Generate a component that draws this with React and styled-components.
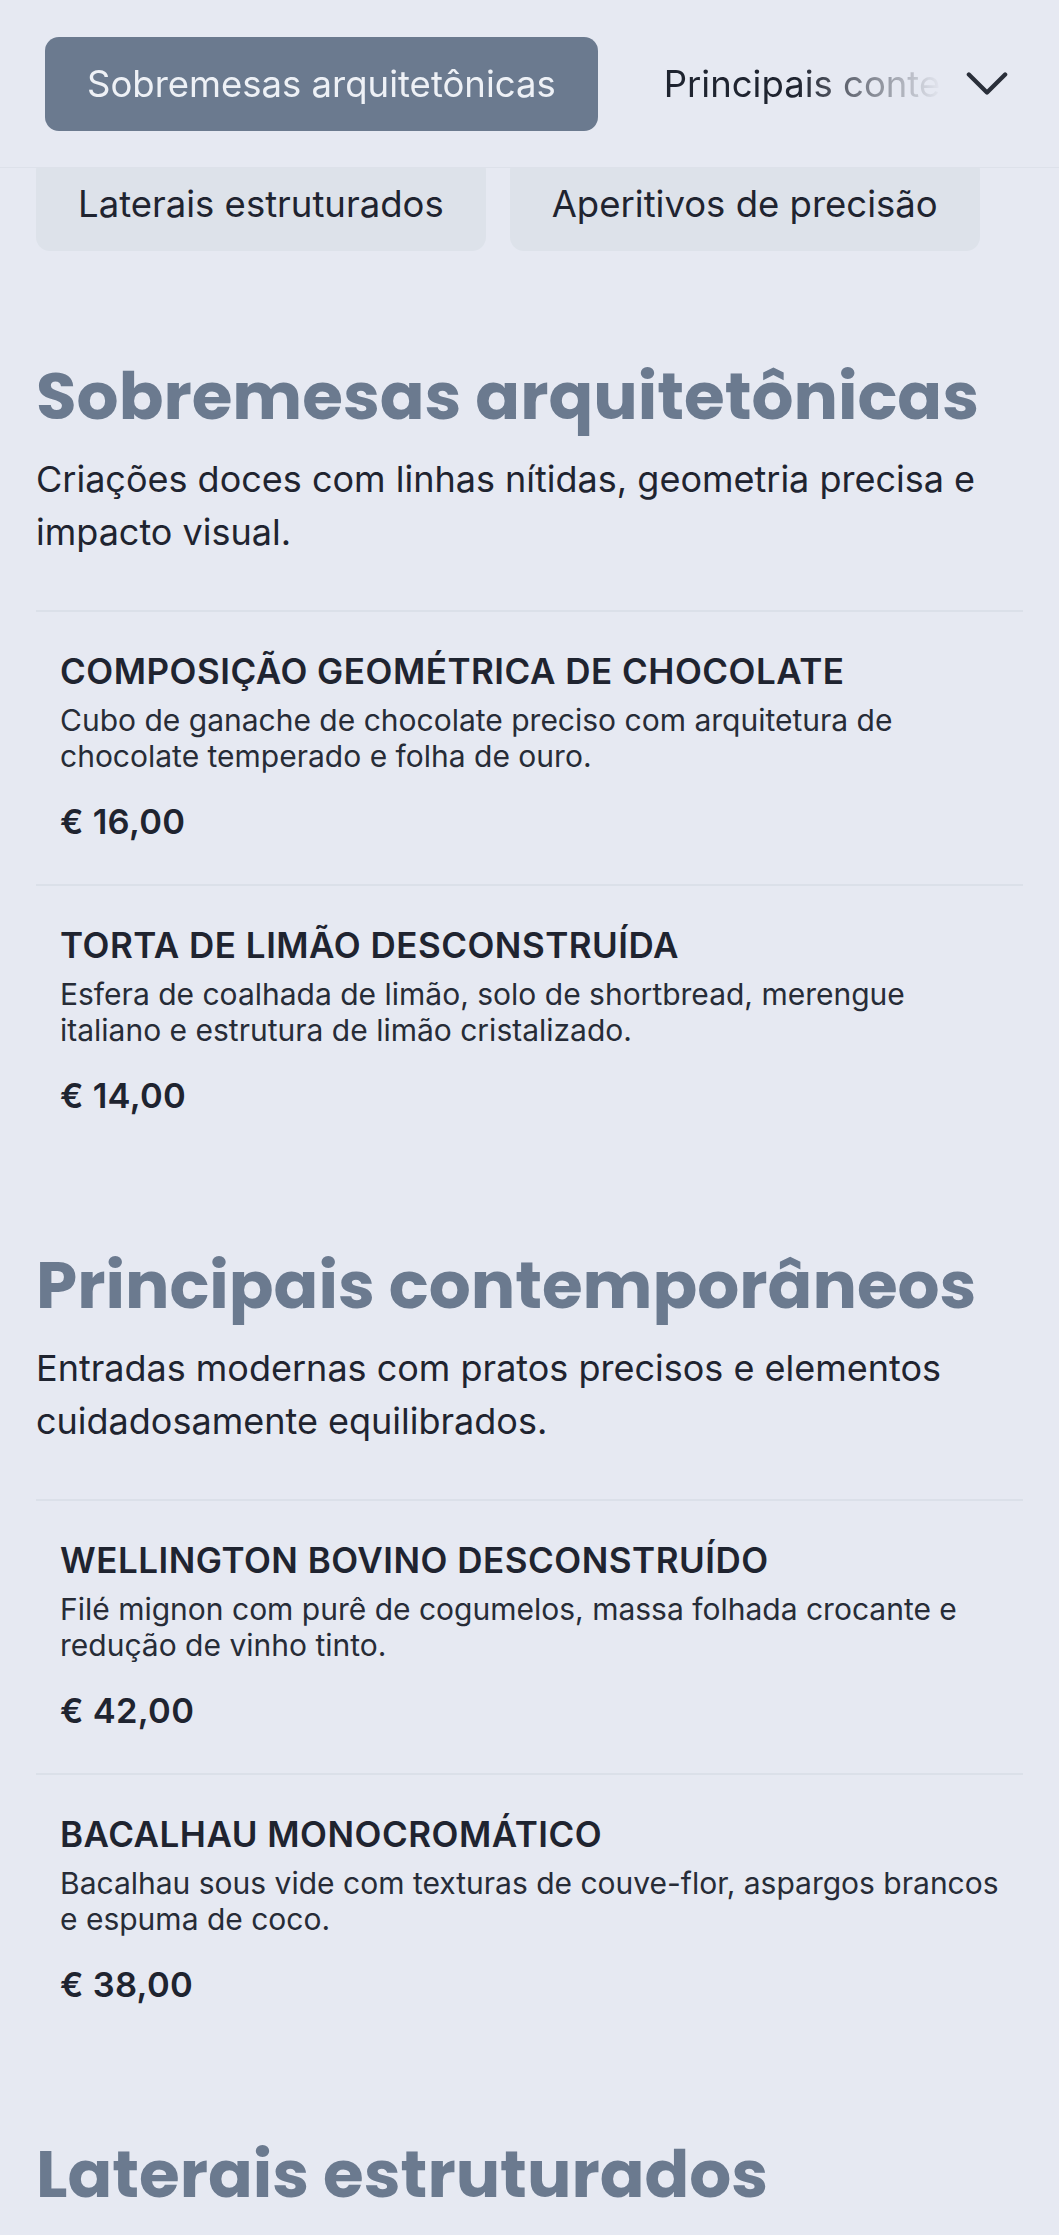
import React from "react";
import styled, { createGlobalStyle } from "styled-components";

const GlobalStyle = createGlobalStyle`
  * {
    box-sizing: border-box;
  }
  body {
    margin: 0;
    background: #e6e9f2;
    color: #1f2430;
    font-family: Inter, "Noto Sans", "Liberation Sans", sans-serif;
  }
`;

const Header = styled.header`
  position: sticky;
  top: 0;
  z-index: 10;
  height: 168px;
  display: flex;
  align-items: center;
  padding: 0 51px 0 45px;
  background: #e6e9f2;
  border-bottom: 1px solid #dde1ea;
`;

const TabScroller = styled.nav`
  flex: 1;
  display: flex;
  gap: 24px;
  overflow: hidden;
  margin-right: 24px;
  -webkit-mask-image: linear-gradient(to right, #000 84%, transparent 100%);
  mask-image: linear-gradient(to right, #000 84%, transparent 100%);
`;

const Tab = styled.button`
  flex-shrink: 0;
  border: none;
  border-radius: 14px;
  padding: 21px 42px;
  font-family: inherit;
  font-size: 36.5px;
  line-height: 52px;
  white-space: nowrap;
  cursor: pointer;
  background: ${(p) => (p.$active ? "#6b7a8f" : p.$muted ? "#dde2ea" : "transparent")};
  color: ${(p) => (p.$active ? "#eef1f6" : "#1f2430")};
`;

const MenuToggle = styled.button`
  display: flex;
  align-items: center;
  justify-content: center;
  width: 42px;
  height: 42px;
  padding: 0;
  border: none;
  background: none;
  color: #2a2f3a;
  cursor: pointer;
`;

const CutRow = styled.div`
  height: 83px;
  overflow: hidden;
  display: flex;
  align-items: flex-end;
  gap: 24px;
  padding: 0 36px;
`;

const Main = styled.main`
  padding: 18px 36px 80px 36px;
`;

const Section = styled.section`
  padding-top: 88px;
`;

const SectionTitle = styled.h2`
  margin: 0 0 17px 0;
  font-family: Poppins, Inter, "Noto Sans", sans-serif;
  font-weight: 700;
  font-size: 66px;
  line-height: 79px;
  color: #6b7a8f;
`;

const SectionText = styled.p`
  margin: 0 0 51px 0;
  font-size: 36px;
  line-height: 53px;
  color: #1f2430;
`;

const Item = styled.article`
  border-top: 2px solid #dbe0e9;
  padding: 39px 24px 40px 24px;
`;

const ItemName = styled.h3`
  margin: 0 0 10px 0;
  font-size: 35px;
  line-height: 41px;
  font-weight: 600;
  letter-spacing: 0.5px;
  text-transform: uppercase;
  color: #1f2430;
`;

const ItemText = styled.p`
  margin: 0 0 26px 0;
  font-size: 30px;
  line-height: 36px;
  color: #272c37;
`;

const Price = styled.div`
  font-size: 34.5px;
  line-height: 44px;
  font-weight: 600;
  letter-spacing: 0.3px;
  color: #1f2430;
`;

const sections = [
  {
    title: "Sobremesas arquitetônicas",
    text: "Criações doces com linhas nítidas, geometria precisa e impacto visual.",
    items: [
      {
        name: "Composição geométrica de chocolate",
        text: "Cubo de ganache de chocolate preciso com arquitetura de chocolate temperado e folha de ouro.",
        price: "€ 16,00",
      },
      {
        name: "Torta de limão desconstruída",
        text: "Esfera de coalhada de limão, solo de shortbread, merengue italiano e estrutura de limão cristalizado.",
        price: "€ 14,00",
      },
    ],
  },
  {
    title: "Principais contemporâneos",
    text: "Entradas modernas com pratos precisos e elementos cuidadosamente equilibrados.",
    items: [
      {
        name: "Wellington bovino desconstruído",
        text: "Filé mignon com purê de cogumelos, massa folhada crocante e redução de vinho tinto.",
        price: "€ 42,00",
      },
      {
        name: "Bacalhau monocromático",
        text: "Bacalhau sous vide com texturas de couve-flor, aspargos brancos e espuma de coco.",
        price: "€ 38,00",
      },
    ],
  },
  {
    title: "Laterais estruturados",
    text: "Acompanhamentos com formas limpas e texturas contrastantes.",
    items: [
      {
        name: "Batatas em camadas",
        text: "Batatas fatiadas finamente, prensadas e douradas com manteiga de ervas.",
        price: "€ 9,00",
      },
    ],
  },
];

const App = () => {
  return (
    <>
      <GlobalStyle />
      <Header>
        <TabScroller>
          <Tab $active>Sobremesas arquitetônicas</Tab>
          <Tab>Principais contemporâneos</Tab>
          <Tab>Laterais estruturados</Tab>
        </TabScroller>
        <MenuToggle aria-label="Mostrar categorias">
          <svg width="44" height="26" viewBox="0 0 44 26" fill="none">
            <polyline
              points="3,3 22,22 41,3"
              stroke="currentColor"
              strokeWidth="4.5"
              strokeLinecap="round"
              strokeLinejoin="round"
            />
          </svg>
        </MenuToggle>
      </Header>
      <CutRow>
        <Tab $muted>Laterais estruturados</Tab>
        <Tab $muted>Aperitivos de precisão</Tab>
      </CutRow>
      <Main>
        {sections.map((section) => (
          <Section key={section.title}>
            <SectionTitle>{section.title}</SectionTitle>
            <SectionText>{section.text}</SectionText>
            {section.items.map((item) => (
              <Item key={item.name}>
                <ItemName>{item.name}</ItemName>
                <ItemText>{item.text}</ItemText>
                <Price>{item.price}</Price>
              </Item>
            ))}
          </Section>
        ))}
      </Main>
    </>
  );
};

export default App;
